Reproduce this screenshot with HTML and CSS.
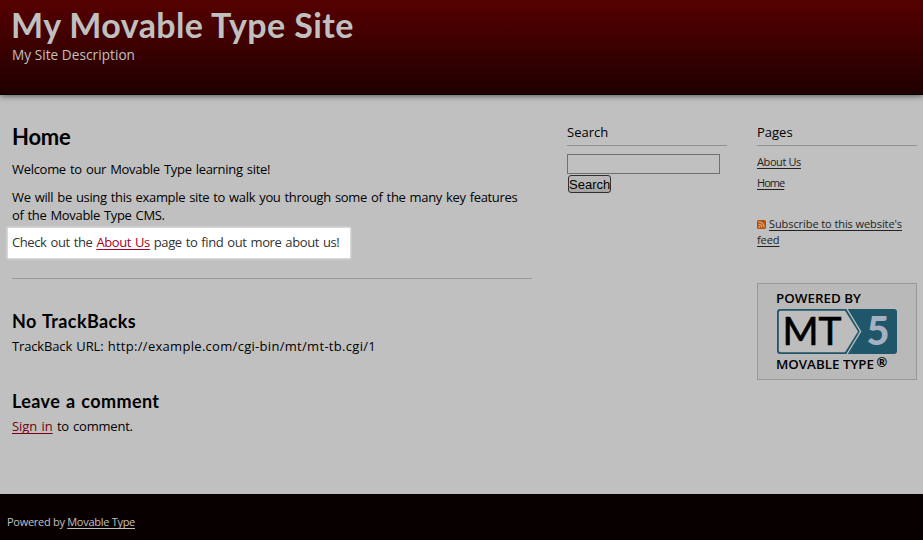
FILE: index.html
```
<!DOCTYPE html>
<html lang="en">
<head>
<meta charset="utf-8">
<title>My Movable Type Site</title>
<link rel="stylesheet" href="styles.css">
</head>
<body>
<header class="header">
  <h1 class="site-name">My Movable Type Site</h1>
  <p class="site-desc">My Site Description</p>
</header>
<div class="content">
  <main class="main">
    <h2 class="page-title">Home</h2>
    <p class="welcome">Welcome to our Movable Type learning site!</p>
    <p class="intro">We will be using this example site to walk you through some of the many key features<br>of the Movable Type CMS.</p>
    <p class="callout">Check out the <a href="#">About Us</a> page to find out more about us!</p>
    <section class="trackbacks">
      <h3>No TrackBacks</h3>
      <p class="url">TrackBack URL: <span class="address">http://example.com/cgi-bin/mt/mt-tb.cgi/1</span></p>
    </section>
    <section class="comments">
      <h3>Leave a comment</h3>
      <p class="signin"><a href="#">Sign in</a> to comment.</p>
    </section>
  </main>
  <aside class="side">
    <h4>Search</h4>
    <form class="search">
      <input type="text" class="field">
      <button type="button" class="go">Search</button>
    </form>
  </aside>
  <aside class="side">
    <h4>Pages</h4>
    <ul class="pages">
      <li><a href="#">About Us</a></li>
      <li><a href="#">Home</a></li>
    </ul>
    <p class="feed"><svg class="rss" width="9" height="9" viewBox="0 0 9 9"><rect width="9" height="9" rx="1.5" fill="#b85108"/><path d="M1.5 1.8a5.7 5.7 0 0 1 5.7 5.7M1.5 4.2a3.3 3.3 0 0 1 3.3 3.3" fill="none" stroke="#d3b8a3" stroke-width="1.1"/><circle cx="2.3" cy="6.8" r=".9" fill="#d3b8a3"/></svg><a href="#">Subscribe to this website's<br>feed</a></p>
    <div class="badge">
      <svg width="158" height="95" viewBox="758 284 158 95">
        <text class="badge-label" x="776" y="303" textLength="85" lengthAdjust="spacingAndGlyphs">POWERED BY</text>
        <rect x="777" y="309" width="120" height="45" rx="3" fill="#1f566a"/>
        <path d="M780.5 310.8H845L858 331.5L845 352.2H780.5Q778.8 352.2 778.8 350.5V312.5Q778.8 310.8 780.5 310.8Z" fill="#bdbdbd"/>
        <path d="M847 309L860.6 331.5L847 354" fill="none" stroke="#bdbdbd" stroke-width="1.4"/>
        <text class="badge-mt" x="782.5" y="345" textLength="59" lengthAdjust="spacingAndGlyphs">MT</text>
        <text class="badge-five" x="866.5" y="345" textLength="23" lengthAdjust="spacingAndGlyphs">5</text>
        <text class="badge-label" x="776" y="369" textLength="98" lengthAdjust="spacingAndGlyphs">MOVABLE TYPE</text>
        <text class="badge-reg" x="876.5" y="366.5">®</text>
      </svg>
    </div>
  </aside>
</div>
<footer class="footer">Powered by <a href="#">Movable Type</a></footer>
</body>
</html>
```
FILE: styles.css
```
* { box-sizing: border-box; }
body {
  margin: 0;
  height: 540px;
  display: flex;
  flex-direction: column;
  overflow: hidden;
  background: #c0c0c0;
  color: #000;
  font: 13px/18px "Open Sans", sans-serif;
}
h1, h2, h3, h4, p, ul { margin: 0; padding: 0; }
.header {
  height: 95px;
  padding: 5px 11px 0;
  background: linear-gradient(#560000, #200000);
  border-bottom: 1px solid #080000;
  box-shadow: 0 1px 6px rgba(0, 0, 0, .55);
  color: #c0c0c0;
}
.site-name { font: 700 34px/40px Lato, sans-serif; letter-spacing: .4px; }
.site-desc { margin: 1px 0 0 1px; font-size: 13.6px; letter-spacing: .05px; }
.content { flex: 1; display: flex; padding-left: 12px; }
.main { width: 520px; margin-right: 35px; padding-top: 29px; white-space: nowrap; word-spacing: 1px; }
.page-title { font: 700 22px/26px Lato, sans-serif; letter-spacing: -.2px; }
.welcome { margin-top: 10px; letter-spacing: -.3px; }
.intro { margin-top: 10px; letter-spacing: -.335px; }
.callout {
  width: 342px;
  margin: 4px 0 0 -4px;
  padding: 5px 0 7px 4px;
  background: #fff;
  box-shadow: 0 0 2px 1px rgba(255, 255, 255, .55);
  color: #333;
  letter-spacing: -.4px;
}
.callout a { color: #a5001c; }
a { text-underline-offset: 2px; text-decoration-thickness: 1px; text-decoration-skip-ink: none; }
.trackbacks { margin-top: 20px; padding-top: 31px; border-top: 1px solid #999; }
h3 { font: 700 18px/22px Lato, sans-serif; letter-spacing: .4px; }
.trackbacks p, .comments p { margin-top: 5px; }
.url { letter-spacing: -.15px; }
.address { letter-spacing: .3px; }
.comments { margin-top: 35px; }
.signin { letter-spacing: -.22px; }
.signin a { color: #76000f; letter-spacing: -.05px; }
.side { width: 160px; margin-right: 30px; padding-top: 28px; flex: none; }
.side:last-child { margin-right: 0; }
h4 { height: 23px; font-weight: 400; border-bottom: 1px solid #909090; }
.search { display: flex; flex-direction: column; align-items: flex-start; padding-top: 8px; }
.field { width: 153px; height: 20px; padding: 0; border: 1px solid #707070; background: #c0c0c0; }
.go {
  width: 43px;
  height: 18px;
  margin: 1px 0 0 1px;
  padding: 0;
  border: 1px solid #303030;
  border-radius: 3px;
  background: linear-gradient(#b8b8b8 45%, #a4a4a4);
  color: #000;
  font: 13px/15px "Liberation Sans", sans-serif;
}
.side a { color: #222; }
.pages, .feed { font-size: 11px; line-height: 16px; white-space: nowrap; }
.pages { list-style: none; padding-top: 8px; letter-spacing: -.4px; }
.pages li { margin-bottom: 5px; }
.pages li + li { letter-spacing: -.95px; }
.feed { margin-top: 25px; letter-spacing: -.08px; }
.rss { margin-right: 3px; vertical-align: -1px; }
.badge { width: 160px; height: 97px; margin-top: 35px; border: 1px solid #999; background: #b9b9b9; }
.badge svg { display: block; }
.badge text { font-family: Lato, sans-serif; }
.badge .badge-label { font-family: "Open Sans", sans-serif; font-size: 13px; font-weight: 600; }
.badge-mt { font-size: 38px; stroke: #000; stroke-width: .7px; }
.badge-five { font-size: 39px; font-weight: 900; fill: #a5b1c0; }
.badge-reg { font-size: 13px; font-weight: 700; }
.footer {
  height: 46px;
  padding: 20px 7px 0;
  background: #080000;
  color: #c0c0c0;
  font-size: 11px;
  line-height: 16px;
  letter-spacing: -.28px;
}
.footer a { color: inherit; }
```
